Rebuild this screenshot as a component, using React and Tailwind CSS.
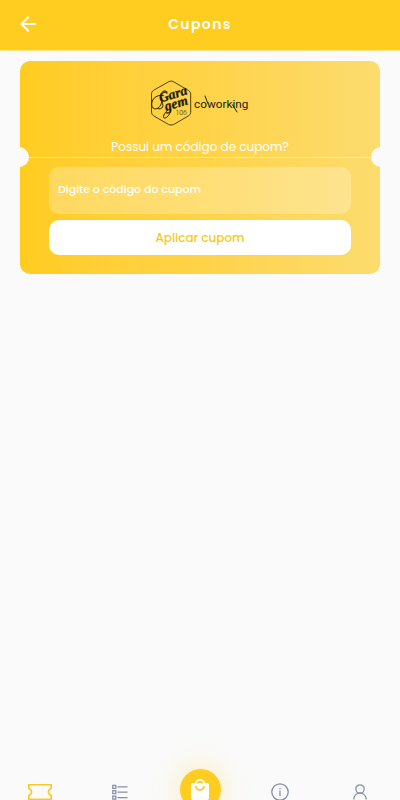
import React, { useState } from "react";

const Header = ({ title }) => (
  <header className="h-[51px] shrink-0 bg-[#ffcc20] border-b border-[#fde48b] grid grid-cols-[40px_1fr_40px] items-center px-2 pb-[3px] text-white">
    <button type="button" aria-label="Voltar" className="flex justify-center">
      <svg viewBox="0 0 24 24" className="w-6 h-6" fill="currentColor">
        <path d="M20 11H7.83l5.59-5.59L12 4l-8 8 8 8 1.41-1.41L7.83 13H20v-2z" />
      </svg>
    </button>
    <h1 className="text-center text-[14px] leading-5 font-semibold tracking-widest">{title}</h1>
  </header>
);

const Logo = () => (
  <svg viewBox="0 0 104 48" className="w-[104px] h-12" role="img" aria-label="Garagem 106 coworking">
    <path
      d="M20.500 1.500Q22.500 .6 24.500 1.500L40 10.500Q42.500 12 42.500 14V33Q42.500 35 40.500 36.500L25 45.500Q22.500 46.600 20 45.500L4.500 36.500Q2.500 35 2.500 33V14Q2.500 12 4.500 10.500Z"
      fill="none"
      stroke="#4a3d14"
      strokeWidth="1"
    />
    <g
      fill="#1c1a12"
      stroke="#1c1a12"
      strokeWidth="0.3"
      fontFamily="'Liberation Serif', serif"
      fontStyle="italic"
      fontWeight="700"
      transform="rotate(-17 22 23)"
    >
      <text x="12" y="20" fontSize="14">Gara</text>
      <text x="15" y="30" fontSize="14">gem</text>
    </g>
    <path
      d="M15 16C7 14 1 21 3 27C5 32 12 29 13 22M12 20C16 26 14 31 8 29M19 31C13 36 14 41 18 38C21 36 22 32 22 30M13 19C11 16 12 11 17 11"
      fill="none"
      stroke="#1c1a12"
      strokeWidth="1"
    />
    <text x="27" y="36" fontSize="7" fill="#1c1a12" fontFamily="Roboto, sans-serif" fontWeight="300">106</text>
    <text x="46" y="29" fontSize="12" fill="#1c1a12" fontFamily="Roboto, sans-serif" fontWeight="400">coworking</text>
    <path d="M57 16L60 24M85 25L90 33" fill="none" stroke="#1c1a12" strokeWidth="1" />
  </svg>
);

const CouponCard = () => {
  const [code, setCode] = useState("");

  return (
    <section className="relative mx-5 mt-[10px] rounded-[10px] overflow-hidden bg-linear-to-r from-[#ffcc20] via-[#ffd347] to-[#fcdc6e]">
      <div className="h-[97px] pt-[19px] flex flex-col items-center border-b border-white/50">
        <Logo />
        <h2 className="mt-[10px] text-[12px] leading-5 text-white whitespace-nowrap">Possui um código de cupom?</h2>
      </div>
      <span className="absolute -left-[11px] top-[86px] w-5 h-5 rounded-full bg-[#fafafa]" />
      <span className="absolute -right-[11px] top-[86px] w-5 h-5 rounded-full bg-[#fafafa]" />

      <form className="px-[29px] pt-[9px] pb-[19px]" onSubmit={(e) => e.preventDefault()}>
        <input
          type="text"
          aria-label="Código do cupom"
          placeholder="Digite o código do cupom"
          value={code}
          onChange={(e) => setCode(e.target.value)}
          className="block w-full h-[47px] px-[9px] pb-[2px] rounded-[10px] bg-white/25 text-[11px] font-medium text-white placeholder:text-white outline-none"
        />
        <button
          type="submit"
          className="mt-[6px] block w-full h-[35px] rounded-[10px] bg-white text-[12px] font-medium text-[#f7c91f]"
        >
          Aplicar cupom
        </button>
      </form>
    </section>
  );
};

const BottomNav = () => (
  <nav className="h-8 shrink-0 grid grid-cols-5 items-start justify-items-center text-[#8490a6]">
    <a href="#cupons" aria-label="Cupons" className="pt-4 text-[#fbc926]">
      <svg viewBox="0 0 24 16" className="w-6 h-4" fill="none" stroke="currentColor" strokeWidth="1.6">
        <path d="M.8 .8H23.200V4.500Q20.500 5.500 20.500 8T23.200 11.500V15.200H.8V11.500Q3.500 10.500 3.500 8T.8 4.500Z" />
      </svg>
    </a>
    <a href="#pedidos" aria-label="Pedidos" className="pt-4">
      <svg viewBox="0 0 16 16" className="w-4 h-4" fill="none" stroke="currentColor" strokeWidth="1.300">
        <path d="M.8 1.300H3.800V4.300H.8ZM.8 6.700H3.800V9.700H.8ZM.8 12.100H3.800V15.100H.8ZM5.500 2.800H15.500M5.500 8.200H15.500M5.500 13.600H15.500" />
      </svg>
    </a>
    <a
      href="#sacola"
      aria-label="Sacola"
      className="w-[41px] h-[41px] mt-px rounded-full bg-[#ffcc20] text-white flex items-center justify-center shadow-[0_0_26px_3px_rgba(255,204,32,0.26)]"
    >
      <svg viewBox="0 0 24 24" className="w-6 h-6">
        <path d="M5 5H19Q21 5 21 7V20Q21 22 19 22H5Q3 22 3 20V7Q3 5 5 5Z" fill="currentColor" />
        <path d="M8 6A4 4 0 0 1 16 6" fill="none" stroke="currentColor" strokeWidth="2.200" />
        <path d="M8 8A4 4 0 0 0 16 8M10 5.600A2 2 0 0 1 14 5.600" fill="none" stroke="#ffcc20" strokeWidth="1.800" />
      </svg>
    </a>
    <a href="#info" aria-label="Informações" className="pt-[15px]">
      <svg viewBox="0 0 18 18" className="w-[18px] h-[18px]" fill="none" stroke="currentColor" strokeWidth="1.300">
        <circle cx="9" cy="9" r="8.200" />
        <path d="M9 7.500V13M9 5V6.300" />
      </svg>
    </a>
    <a href="#perfil" aria-label="Perfil" className="pt-4">
      <svg viewBox="0 0 14 16" className="w-[14px] h-4" fill="none" stroke="currentColor" strokeWidth="1.300">
        <circle cx="7" cy="5" r="4.200" />
        <path d="M.8 15.500C.8 11.500 3.500 9.200 7 9.200S13.200 11.500 13.200 15.500" />
      </svg>
    </a>
  </nav>
);

const App = () => (
  <div className="h-screen overflow-hidden flex flex-col bg-[#fafafa] font-['Poppins','Inter',sans-serif]">
    <Header title="Cupons" />
    <main className="flex-1">
      <CouponCard />
    </main>
    <BottomNav />
  </div>
);

export default App;
